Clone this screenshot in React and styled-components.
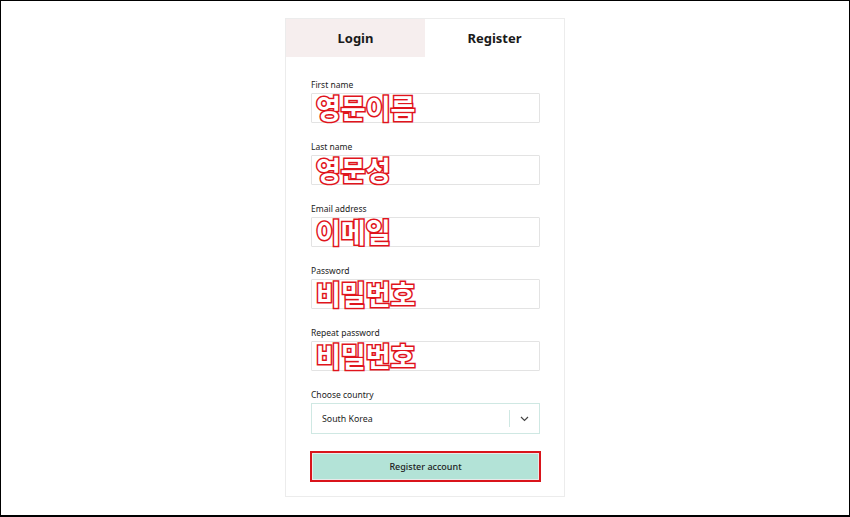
import React, { useState } from "react";
import styled, { createGlobalStyle } from "styled-components";

const Global = createGlobalStyle`
  html, body { margin: 0; padding: 0; background: #ffffff; }
  * { box-sizing: border-box; }
`;

const Frame = styled.div`
  width: 850px;
  height: 517px;
  border: 1px solid #000;
  border-bottom-width: 2px;
  background: #fff;
  padding-top: 17px;
  font-family: "Noto Sans", "Liberation Sans", sans-serif;
  color: #1d1d1d;
`;

const Card = styled.div`
  width: 280px;
  margin: 0 auto;
  border: 1px solid #ececec;
  background: #fff;
`;

const Tabs = styled.div`
  display: grid;
  grid-template-columns: 1fr 1fr;
  height: 38px;
`;

const Tab = styled.button`
  border: 0;
  margin: 0;
  padding: 0;
  background: ${(p) => (p.$active ? "#ffffff" : "#f6eeee")};
  font-family: "Noto Sans", "Liberation Sans", sans-serif;
  font-weight: 700;
  font-size: 13px;
  color: #1a1a1a;
  cursor: pointer;
`;

const Form = styled.form`
  display: flex;
  flex-direction: column;
  padding: 22px 24px 14px 25px;
`;

const Field = styled.div`
  display: flex;
  flex-direction: column;
  gap: 2px;
  margin-bottom: 18px;
`;

const Label = styled.label`
  font-size: 8.5px;
  line-height: 12px;
  color: #222;
`;

const ValueBox = styled.div`
  width: 100%;
  height: 30px;
  border: 1px solid #e3e3e3;
  border-radius: 1px;
  padding: 0 0 0 4px;
  background: #fff;
  font-family: "Noto Sans CJK KR", sans-serif;
  font-weight: 700;
  font-size: 27px;
  line-height: 28px;
  letter-spacing: 0;
  color: #ffffff;
  -webkit-text-stroke: 3px #e0141c;
  paint-order: stroke fill;
  white-space: nowrap;
`;

const SelectBox = styled.div`
  display: flex;
  align-items: center;
  height: 31px;
  border: 1px solid #cfe8e3;
  background: #fff;
`;

const SelectValue = styled.div`
  flex: 1;
  padding-left: 10px;
  font-size: 8.8px;
  color: #1d1d1d;
`;

const Divider = styled.span`
  width: 1px;
  height: 17px;
  background: #cfe8e3;
`;

const Chevron = styled.span`
  display: flex;
  align-items: center;
  justify-content: center;
  width: 29px;
  color: #333;
`;

const Submit = styled.button`
  width: calc(100% + 2px);
  height: 31px;
  margin: -1px 0 0 -1px;
  border: 2px solid #d9141b;
  box-shadow: inset 0 0 0 1px #e9e9e9;
  background: #b3e3d7;
  font-family: "Noto Sans", "Liberation Sans", sans-serif;
  font-size: 9px;
  font-weight: 500;
  color: #1d1d1d;
  cursor: pointer;
`;

const fields = [
  { id: "first", label: "First name", value: "영문이름" },
  { id: "last", label: "Last name", value: "영문성" },
  { id: "email", label: "Email address", value: "이메일" },
  { id: "pw", label: "Password", value: "비밀번호" },
  { id: "pw2", label: "Repeat password", value: "비밀번호" },
];

export default function App() {
  const [tab, setTab] = useState("register");
  return (
    <>
      <Global />
      <Frame>
        <Card>
          <Tabs>
            <Tab $active={tab === "login"} onClick={() => setTab("login")}>Login</Tab>
            <Tab $active={tab === "register"} onClick={() => setTab("register")}>Register</Tab>
          </Tabs>
          <Form onSubmit={(e) => e.preventDefault()}>
            {fields.map((f) => (
              <Field key={f.id}>
                <Label htmlFor={f.id}>{f.label}</Label>
                <ValueBox id={f.id} role="textbox">{f.value}</ValueBox>
              </Field>
            ))}
            <Field>
              <Label>Choose country</Label>
              <SelectBox>
                <SelectValue>South Korea</SelectValue>
                <Divider />
                <Chevron>
                  <svg width="9" height="6" viewBox="0 0 9 6" fill="none">
                    <path d="M1 1l3.5 3.5L8 1" stroke="#444" strokeWidth="1.2" />
                  </svg>
                </Chevron>
              </SelectBox>
            </Field>
            <Submit type="submit">Register account</Submit>
          </Form>
        </Card>
      </Frame>
    </>
  );
}
